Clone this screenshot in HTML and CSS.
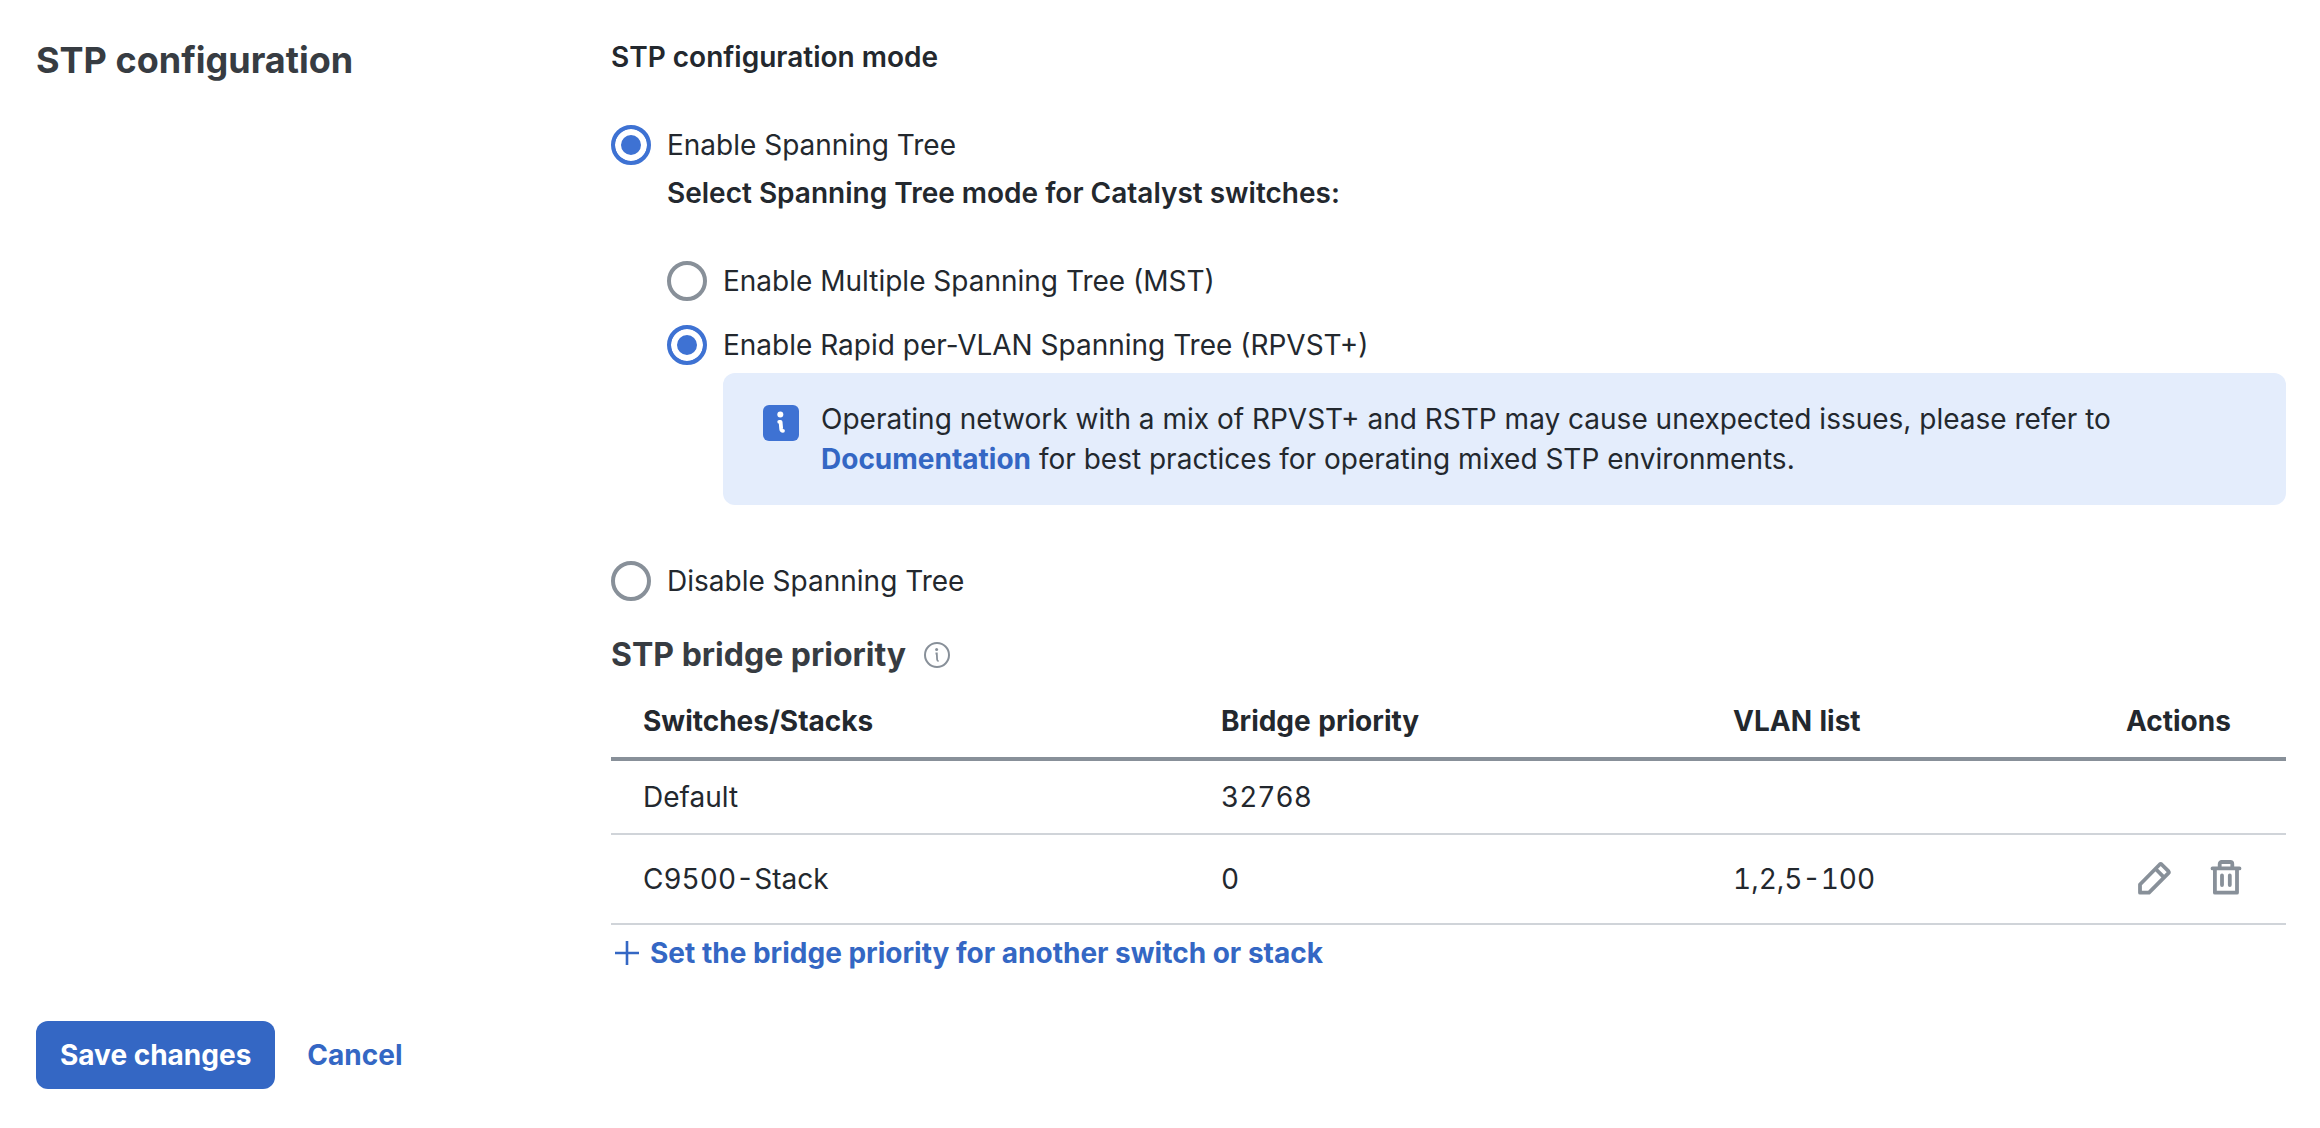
FILE: index.html
```
<!DOCTYPE html>
<html lang="en">
<head>
    <meta charset="UTF-8">
    <meta name="viewport" content="width=device-width, initial-scale=1.0">
    <title>STP configuration</title>
    <link rel="stylesheet" href="styles.css">
</head>
<body>
    <form class="page">
        <div class="settings">
            <h1 class="page-title">STP configuration</h1>
            <div class="content">
                <h2 class="mode-title">STP configuration mode</h2>

                <div class="radio-row">
                    <input type="radio" id="stpEnable" name="stp" checked>
                    <label for="stpEnable">Enable Spanning Tree</label>
                </div>
                <div class="nested">
                    <h3 class="sub-title">Select Spanning Tree mode for Catalyst switches:</h3>
                    <div class="radio-row">
                        <input type="radio" id="modeMst" name="mode">
                        <label for="modeMst">Enable Multiple Spanning Tree (MST)</label>
                    </div>
                    <div class="radio-row next">
                        <input type="radio" id="modeRpvst" name="mode" checked>
                        <label for="modeRpvst">Enable Rapid per-VLAN Spanning Tree (RPVST+)</label>
                    </div>
                    <div class="alert">
                        <svg class="alert-icon" viewBox="0 0 36 36">
                            <rect width="36" height="36" rx="6" fill="#3e72d3"/>
                            <circle cx="17.3" cy="9.5" r="3" fill="#fff"/>
                            <path d="M16.2 16.8H17.6L18.2 24Q18.4 25.8 20 25.8" fill="none" stroke="#fff" stroke-width="3.8" stroke-linecap="round" stroke-linejoin="round"/>
                        </svg>
                        <p>Operating network with a mix of RPVST+ and RSTP may cause unexpected issues, please refer to <a href="#">Documentation</a> for best practices for operating mixed STP environments.</p>
                    </div>
                </div>
                <div class="radio-row last">
                    <input type="radio" id="stpDisable" name="stp">
                    <label for="stpDisable">Disable Spanning Tree</label>
                </div>

                <h2 class="priority-title">
                    STP bridge priority
                    <svg class="info-icon" viewBox="0 0 26 26" fill="none" stroke="#889099">
                        <circle cx="13" cy="13" r="12" stroke-width="2"/>
                        <circle cx="12.6" cy="7.5" r="1.5" fill="#889099" stroke="none"/>
                        <path d="M11.5 11.5H12.8L13.1 17.5Q13.2 19 14.6 19" stroke-width="1.8"/>
                    </svg>
                </h2>
                <table>
                    <thead>
                        <tr>
                            <th>Switches/Stacks</th>
                            <th class="col-priority">Bridge priority</th>
                            <th class="col-vlan">VLAN list</th>
                            <th class="col-actions">Actions</th>
                        </tr>
                    </thead>
                    <tbody>
                        <tr>
                            <td>Default</td>
                            <td>32768</td>
                            <td></td>
                            <td></td>
                        </tr>
                        <tr class="tall">
                            <td>C9500-Stack</td>
                            <td>0</td>
                            <td>1,2,5-100</td>
                            <td class="actions-cell">
                                <div class="actions">
                                    <button type="button" class="icon-btn" aria-label="Edit">
                                        <svg viewBox="0 0 40 40">
                                            <path d="M6 25.5V33.7H15L34.4 14.2Q35.3 13.2 34.4 12.2L27.7 5.5Q26.7 4.6 25.7 5.5ZM21.7 10L30 18.3"/>
                                        </svg>
                                    </button>
                                    <button type="button" class="icon-btn" aria-label="Delete">
                                        <svg viewBox="0 0 40 40">
                                            <path d="M6.5 9.4H33.5M13.7 9V5Q13.7 3 15.7 3H24.3Q26.3 3 26.3 5V9M8.9 9.5V33.7H31V9.5M16 16.5V26M23.8 16.5V26"/>
                                        </svg>
                                    </button>
                                </div>
                            </td>
                        </tr>
                    </tbody>
                </table>
                <a href="#" class="add-link">
                    <svg viewBox="0 0 26 26">
                        <path d="M13 1V25M1 13H25" stroke="#3467c4" stroke-width="2.6"/>
                    </svg>
                    Set the bridge priority for another switch or stack
                </a>
            </div>
        </div>

        <div class="footer">
            <button type="submit" class="save-btn">Save changes</button>
            <button type="button" class="cancel-btn">Cancel</button>
        </div>
    </form>
</body>
</html>
```
FILE: styles.css
```
* {
    box-sizing: border-box;
}
body {
    font-family: Inter, Arial, sans-serif;
    font-size: 28px;
    line-height: 40px;
    color: #23282e;
    background-color: #fff;
    margin: 0;
}
h1, h2, h3, p {
    margin: 0;
}
.page {
    padding: 37px 34px 37px 36px;
}
.settings {
    display: grid;
    grid-template-columns: 575px 1fr;
}
.page-title {
    font-size: 36px;
    line-height: 46px;
    font-weight: 700;
    color: #373c42;
}
.mode-title, .sub-title {
    font-size: 28px;
    line-height: 40px;
    font-weight: 600;
    margin-bottom: 48px;
}
.radio-row {
    display: flex;
    align-items: center;
    gap: 16px;
}
.radio-row.next {
    margin-top: 24px;
}
.radio-row.last {
    margin-top: 56px;
}
input[type="radio"] {
    appearance: none;
    width: 40px;
    height: 40px;
    margin: 0;
    border: 4px solid #889099;
    border-radius: 50%;
    background-color: #fff;
}
input[type="radio"]:checked {
    border-color: #3e72d3;
    background-color: #3e72d3;
    box-shadow: inset 0 0 0 6px #fff;
}
.nested {
    margin-top: 8px;
    margin-left: 56px;
}
.alert {
    display: flex;
    gap: 22px;
    margin: 8px 0 0 56px;
    padding: 26px 40px;
    background-color: #e4edfc;
    border-radius: 12px;
}
.alert-icon {
    flex: none;
    width: 36px;
    height: 36px;
    margin-top: 6px;
}
a {
    color: #3467c4;
    font-weight: 700;
    text-decoration: none;
}
.priority-title {
    display: flex;
    align-items: center;
    gap: 18px;
    margin-top: 32px;
    font-size: 32px;
    line-height: 44px;
    font-weight: 700;
    color: #373c42;
}
.info-icon {
    width: 26px;
    height: 26px;
}
table {
    width: 100%;
    table-layout: fixed;
    border-collapse: separate;
    border-spacing: 0;
    font-variant-numeric: tabular-nums;
}
th, td {
    padding: 16px 0 16px 32px;
    text-align: left;
}
th {
    padding-top: 24px;
    font-weight: 700;
    border-bottom: 4px solid #889099;
}
td {
    border-bottom: 2px solid #d0d4d9;
}
.tall td {
    padding-top: 24px;
    padding-bottom: 24px;
}
.col-priority {
    width: 512px;
}
.col-vlan {
    width: 393px;
}
.col-actions {
    width: 192px;
}
.tall .actions-cell {
    padding-right: 40px;
}
.actions {
    display: flex;
    justify-content: flex-end;
    gap: 32px;
}
.icon-btn {
    width: 40px;
    height: 40px;
    padding: 0;
    border: none;
    background: none;
    cursor: pointer;
}
.icon-btn svg {
    display: block;
    fill: none;
    stroke: #889099;
    stroke-width: 3.8;
    stroke-linecap: round;
    stroke-linejoin: round;
}
.add-link {
    display: flex;
    align-items: center;
    gap: 10px;
    margin-top: 8px;
    padding-left: 3px;
}
.add-link svg {
    width: 26px;
    height: 26px;
}
.footer {
    display: flex;
    gap: 32px;
    margin-top: 48px;
}
.save-btn, .cancel-btn {
    font-family: inherit;
    font-size: 28px;
    line-height: 40px;
    font-weight: 700;
    padding: 14px 24px;
    border: none;
    border-radius: 12px;
    cursor: pointer;
}
.save-btn {
    background-color: #3467c4;
    color: #fff;
}
.save-btn:hover {
    background-color: #2a55a5;
}
.cancel-btn {
    padding: 14px 0;
    background: none;
    color: #3467c4;
}
```
